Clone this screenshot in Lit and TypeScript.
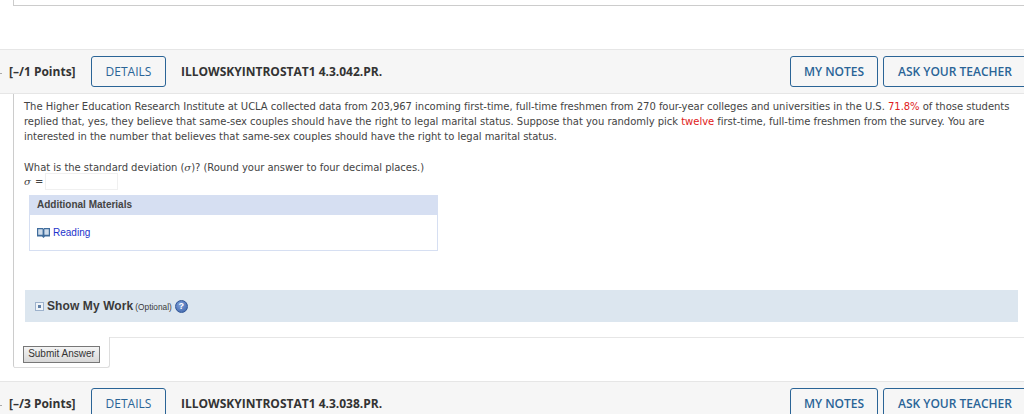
import { LitElement, html, css } from "lit";
import { customElement } from "lit/decorators.js";

@customElement("q-head")
class QHead extends LitElement {
  static properties = { points: {}, code: {} };
  points = "";
  code = "";
  static styles = css`
    :host { display: block; }
    .bar {
      display: flex; align-items: center; height: 43px; box-sizing: content-box;
      background: #f6f6f6; border-top: 1px solid #e6e6e6; border-bottom: 1px solid #e6e6e6;
      font-family: "Open Sans", sans-serif; font-size: 12px; color: #333;
      overflow: hidden;
    }
    .tick { width: 2px; height: 1px; background: #aaa; margin: 4px 7px 0 0; }
    .pts { font-weight: 700; width: 82px; white-space: nowrap; }
    .code { font-weight: 700; margin-left: 15px; flex: 1; white-space: nowrap; }
    .btn {
      display: flex; align-items: center; justify-content: center; box-sizing: border-box;
      height: 31px; border: 1.5px solid #2a6496; border-radius: 3px;
      color: #2a6496; font-size: 12px; font-weight: 600; background: #f6f6f6; white-space: nowrap;
    }
    .details { width: 75px; font-weight: 400; }
    .notes { width: 88px; margin-right: 5px; }
    .ask { width: 147px; margin-right: -6px; padding-right: 3px; }
  `;
  render() {
    return html`<div class="bar">
      <span class="tick"></span>
      <span class="pts">${this.points}</span>
      <span class="btn details">DETAILS</span>
      <span class="code">${this.code}</span>
      <span class="btn notes">MY NOTES</span>
      <span class="btn ask">ASK YOUR TEACHER</span>
    </div>`;
  }
}

@customElement("app-root")
class AppRoot extends LitElement {
  static styles = css`
    :host { display: block; height: 414px; overflow: hidden; background: #fff; }
    .prev { height: 5px; margin-left: 13px; border-left: 1px solid #ccc; border-bottom: 1px solid #ccc; margin-bottom: 43px; }
    .panel {
      margin-left: 13px; border-left: 1px solid #ccc; height: 274px;
      border-radius: 0 0 0 3px; display: flex; flex-direction: column;
      font-family: "DejaVu Sans", Verdana, sans-serif; font-size: 10px; color: #444;
    }
    .body { padding: 5px 6px 0 10px; flex: 1; }
    .txt { margin: 0; line-height: 15px; white-space: nowrap; letter-spacing: -0.03px; }
    .red { color: #e02020; }
    .ask { margin: 19px 0 0; line-height: 9px; letter-spacing: -0.03px; }
    .ans { display: flex; align-items: center; height: 18px; }
    .sig { font-family: "DejaVu Serif", serif; font-style: italic; }
    .ans .sig { width: 8px; }
    .eq { margin-left: 3px; width: 10px; }
    .inp { width: 73px; height: 17px; box-sizing: border-box; border: 1px solid #f0f0f0; }
    .mats { width: 409px; margin: 5px 0 0 5px; box-sizing: border-box; border: 1px solid #d6dff2; border-top: 0; height: 56px; font-family: "Liberation Sans", Arial, sans-serif; }
    .mats h4 { margin: 0; height: 20px; background: #d6dff2; font-size: 10px; line-height: 20px; padding-left: 7px; color: #444; font-weight: 700; }
    .read { display: flex; align-items: center; gap: 3px; margin: 12px 0 0 7px; color: #2233cc; font-size: 10px; }
    .work {
      display: flex; align-items: center; margin: 39px 0 0 1px; height: 32px; background: #dce6ef; width: 993px;
      font-family: "Liberation Sans", Arial, sans-serif; color: #3a3a3a; padding-left: 10px; box-sizing: border-box;
    }
    .plus { width: 7px; height: 7px; border: 1px solid #9db2cc; background: #eef3f8; display: flex; align-items: center; justify-content: center; margin-right: 3px; }
    .plus i { width: 3px; height: 3px; background: #5f7fa6; display: block; }
    .work b { font-size: 12px; letter-spacing: .1px; }
    .opt { font-size: 8.3px; margin: 2px 3px 0 2px; }
    .help { width: 13px; height: 13px; border-radius: 50%; background: radial-gradient(circle at 40% 35%, #7f9fd8, #3a62a8); border: 1px solid #2f5597; box-sizing: border-box; color: #fff; font-size: 9px; font-weight: 700; display: flex; align-items: center; justify-content: center; }
    .foot { display: flex; height: 31px; }
    .tab { width: 96px; box-sizing: border-box; border-right: 1px solid #ddd; border-bottom: 1px solid #ddd; border-radius: 0 0 3px 0; padding: 9px 0 0 9px; }
    .rest { flex: 1; border-top: 1px solid #e6e6e6; }
    .sub { width: 77px; height: 17px; box-sizing: border-box; border: 1px solid #777; background: linear-gradient(#f4f4f4, #d8d8d8); font-family: "Liberation Sans", Arial, sans-serif; font-size: 10px; color: #333; text-align: center; line-height: 14px; }
    q-head.second { margin-top: 13px; }
  `;
  render() {
    return html`
      <div class="prev"></div>
      <q-head points="[–/1 Points]" code="ILLOWSKYINTROSTAT1 4.3.042.PR."></q-head>
      <div class="panel">
        <div class="body">
          <p class="txt">The Higher Education Research Institute at UCLA collected data from 203,967 incoming first-time, full-time freshmen from 270 four-year colleges and universities in the U.S. <span class="red">71.8%</span> of those students<br>replied that, yes, they believe that same-sex couples should have the right to legal marital status. Suppose that you randomly pick <span class="red">twelve</span> first-time, full-time freshmen from the survey. You are<br>interested in the number that believes that same-sex couples should have the right to legal marital status.</p>
          <p class="ask">What is the standard deviation (<span class="sig">σ</span>)? (Round your answer to four decimal places.)</p>
          <div class="ans"><span class="sig">σ</span><span class="eq">=</span><span class="inp"></span></div>
          <div class="mats">
            <h4>Additional Materials</h4>
            <div class="read">
              <svg width="13" height="10" viewBox="0 0 13 10"><path d="M0 0h6l.5 1L7 0h6v8.5H8L6.5 10 5 8.5H0z" fill="#3f6c9c"/><path d="M1.2 1.2h4.4v5.6H1.2zM7.4 1.2h4.4v5.6H7.4z" fill="#cfdcea"/></svg>
              <span>Reading</span>
            </div>
          </div>
          <div class="work"><span class="plus"><i></i></span><b>Show My Work</b><span class="opt">(Optional)</span><span class="help">?</span></div>
        </div>
        <div class="foot"><div class="tab"><div class="sub">Submit Answer</div></div><div class="rest"></div></div>
      </div>
      <q-head class="second" points="[–/3 Points]" code="ILLOWSKYINTROSTAT1 4.3.038.PR."></q-head>
    `;
  }
}
